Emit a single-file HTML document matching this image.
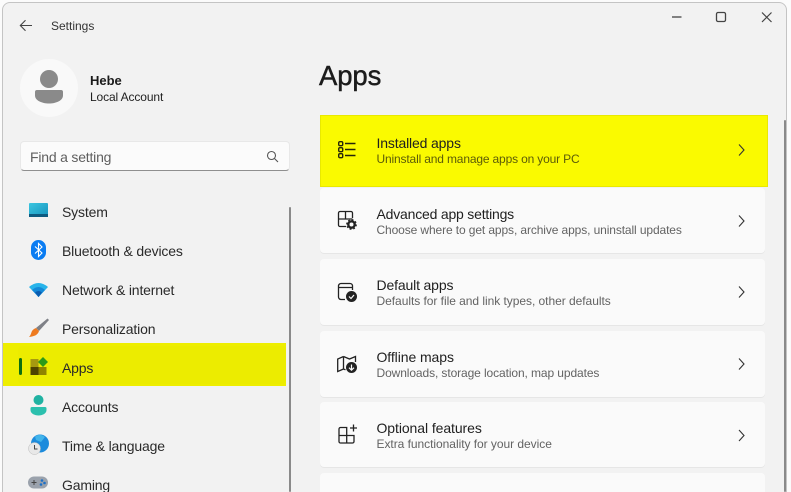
<!DOCTYPE html>
<html><head><meta charset="utf-8">
<style>
html,body{margin:0;padding:0;width:791px;height:492px;overflow:hidden}
#root{position:relative;width:791px;height:492px;overflow:hidden;background:#fbfbfb;font-family:"Liberation Sans",sans-serif;color:#1b1b1b}
.a{position:absolute}
.t{position:absolute;white-space:nowrap;line-height:18px}
#win{left:2px;top:2px;width:785px;height:500px;background:#f2f2f2;border:1px solid #c4c4c4;border-radius:8px 8px 0 0;box-sizing:border-box}
.nav{font-size:14px;color:#2a2a2a;left:62px;letter-spacing:-.16px}
.card{position:absolute;left:320px;width:445px;background:#fafafa;border-radius:4px;box-shadow:0 1px 0 #e6e6e6}
.h{position:absolute;left:376.5px;font-size:14px;color:#1f1f1f;white-space:nowrap;line-height:18px;letter-spacing:-.15px}
.s{position:absolute;left:376.5px;font-size:12px;color:#636363;white-space:nowrap;line-height:16px;letter-spacing:-.1px}
svg{position:absolute;overflow:visible}
</style></head><body><div id="root">
<div id="win" class="a"></div>

<svg style="left:19px;top:18px" width="15" height="15" viewBox="0 0 15 15" fill="none" stroke="#444" stroke-width="1.100"><path d="M1.500 7.500H13M6.500 2.200L1.300 7.500l5.200 5.300"/></svg>
<div class="t" style="left:51px;top:17px;font-size:12px;color:#333;letter-spacing:0">Settings</div>

<svg style="left:654px;top:0" width="137" height="34" fill="none" stroke="#444"><path d="M18 17h9.500" stroke-width="1.300"/><rect x="62.500" y="12.500" width="9" height="9" rx="1.500" stroke-width="1.300"/><path d="M108 12.500l9.500 9.500M117.500 12.500l-9.500 9.500" stroke-width="1.200"/></svg>

<div class="a" style="left:20px;top:59px;width:58px;height:58px;border-radius:50%;background:#f9f9f9"></div>
<svg style="left:34px;top:69px" width="30" height="36"><circle cx="15" cy="10" r="9" fill="#8a8a8a"/><path d="M3 21h24a2 2 0 0 1 2 2v3.500c0 5-7 8-14 8s-14-3-14-8V23a2 2 0 0 1 2-2z" fill="#8a8a8a"/></svg>
<div class="t" style="left:90px;top:72px;font-size:13px;font-weight:bold;color:#1a1a1a">Hebe</div>
<div class="t" style="left:90px;top:88px;font-size:12px;color:#222;letter-spacing:-.12px">Local Account</div>

<div class="a" style="left:20px;top:141px;width:270px;height:30px;background:#fbfbfb;border-radius:4px;border:1px solid #e8e8e8;border-bottom:1.500px solid #8f8f8f;box-sizing:border-box"></div>
<div class="t" style="left:30px;top:148px;font-size:14px;color:#5f5f5f;letter-spacing:-.2px">Find a setting</div>
<svg style="left:266px;top:150px" width="13" height="13" fill="none" stroke="#555" stroke-width="1.100"><circle cx="5.500" cy="5.500" r="4"/><path d="M8.500 8.500l3.500 3.500"/></svg>

<div class="a" style="left:3px;top:343px;width:283px;height:43px;background:#eeee00"></div>
<div class="a" style="left:18px;top:346px;width:268px;height:38px;border-radius:4px;background:#ecec00"></div>
<div class="a" style="left:19px;top:358px;width:3px;height:17px;border-radius:2px;background:#0c6f10"></div>

<svg style="left:29px;top:203px" width="19" height="16"><defs><linearGradient id="g1" x1="0" y1="0" x2="1" y2="1"><stop offset="0" stop-color="#3cc6e0"/><stop offset="1" stop-color="#1492bd"/></linearGradient></defs><rect width="19" height="14" rx="1" fill="url(#g1)"/><rect y="11" width="19" height="3" fill="#0d5a80"/></svg>
<div class="t nav" style="top:203px">System</div>

<svg style="left:31px;top:240px" width="15" height="20"><rect width="15" height="20" rx="7.500" fill="#0a7cf2"/><path d="M4 6.500l7 6.500-3.500 3.500V3.500L11 7l-7 6.500" fill="none" stroke="#fff" stroke-width="1.100"/></svg>
<div class="t nav" style="top:242px">Bluetooth &amp; devices</div>

<svg style="left:29px;top:282px" width="19" height="15"><path d="M0 5Q9.500-3 19 5L9.500 15z" fill="#28b4ea"/><path d="M3 8Q9.500 2 16 8L9.500 15z" fill="#1489d8"/><path d="M6 10.500Q9.500 7.500 13 10.500L9.500 15z" fill="#0b5cb0"/></svg>
<div class="t nav" style="top:281px">Network &amp; internet</div>

<svg style="left:29px;top:318px" width="20" height="20"><path d="M18.500 0.500L20 2 10 13 7 10z" fill="#7f8187"/><path d="M7 10l3 3c-1 4-5 5.500-10 6 2-2 2-4 3-6 1-1.500 2.500-2.500 4-3z" fill="#ee7a1f"/></svg>
<div class="t nav" style="top:320px">Personalization</div>

<svg style="left:30px;top:357px" width="18" height="18"><rect x="0.500" y="2" width="8" height="8" fill="#a69a10"/><rect x="0.500" y="10" width="8" height="8" fill="#4e4400"/><rect x="8.500" y="10" width="8" height="8" fill="#8f8400"/><path d="M13 0l5 5-5 5-5-5z" fill="#2c9a18"/></svg>
<div class="t nav" style="top:359px">Apps</div>

<svg style="left:30px;top:395px" width="17" height="21"><circle cx="8.500" cy="5" r="5" fill="#20b2a2"/><path d="M2 12h13a1.500 1.500 0 0 1 1.500 1.500V15c0 3.500-4 5.500-8 5.500s-8-2-8-5.500v-1.500A1.500 1.500 0 0 1 2 12z" fill="#2cc0ae"/></svg>
<div class="t nav" style="top:398px">Accounts</div>

<svg style="left:28px;top:434px" width="21" height="21"><circle cx="12" cy="9.500" r="9" fill="#1c8bdc"/><path d="M7 2.500Q12-1 17 3L13 8 8 6z" fill="#42b4ea"/><circle cx="6.500" cy="14.500" r="6" fill="#e8e8e8" stroke="#bbb" stroke-width=".5"/><path d="M6.500 11v4h3" fill="none" stroke="#444" stroke-width="1"/></svg>
<div class="t nav" style="top:437px">Time &amp; language</div>

<svg style="left:28px;top:476px" width="21" height="16"><rect y="0.500" width="20" height="12" rx="6" fill="#9ba2ac"/><path d="M3.500 6.500h5M6 4v5" stroke="#444" stroke-width="1"/><circle cx="14" cy="4.500" r="1.300" fill="#1c70c8"/><circle cx="16.500" cy="7" r="1.300" fill="#1c70c8"/><circle cx="13" cy="8.500" r="1.300" fill="#1c70c8"/></svg>
<div class="t nav" style="top:476px">Gaming</div>

<div class="a" style="left:289px;top:207px;width:2px;height:285px;background:#8a8a8a;border-radius:1px"></div>
<div class="a" style="left:783.500px;top:120px;width:2px;height:372px;background:#8a8a8a;border-radius:1px"></div>

<div class="t" style="left:319px;top:60px;font-size:27.500px;line-height:32px;color:#1c1c1c;letter-spacing:-.1px;-webkit-text-stroke:.45px #1c1c1c">Apps</div>

<div class="a" style="left:320px;top:115px;width:448px;height:72px;background:#fafa00;box-sizing:border-box;border:1.500px solid #e9e900"></div>
<svg style="left:338px;top:141px" width="19" height="17" fill="none" stroke="#26260a" stroke-width="1.400"><rect x="0.700" y="0.700" width="4" height="4" rx="1.200"/><rect x="0.700" y="6.700" width="4" height="4" rx="1.200"/><rect x="0.700" y="12.700" width="4" height="4" rx="1.200"/><path d="M7 2.500h10.500M7 8.500h10.500M7 14.500h10.500"/></svg>
<div class="h" style="top:134px">Installed apps</div>
<div class="s" style="top:151px;color:#5c5c08;letter-spacing:-.16px">Uninstall and manage apps on your PC</div>

<div class="card" style="top:188px;height:65px"></div>
<svg style="left:338px;top:211px" width="20" height="20" fill="none" stroke="#222" stroke-width="1.300"><path d="M8 15.500H2a1.500 1.500 0 0 1-1.500-1.500V2A1.500 1.500 0 0 1 2 .5h11A1.500 1.500 0 0 1 14.500 2v5M.5 8h14M7.500.5V8"/><circle cx="13.500" cy="13.500" r="3.200" stroke-width="2.400"/><circle cx="13.500" cy="13.500" r="4.700" stroke-dasharray="1.800 1.900" stroke-width="1.400"/></svg>
<div class="h" style="top:205px;letter-spacing:-.2px">Advanced app settings</div>
<div class="s" style="top:222px;letter-spacing:-.11px">Choose where to get apps, archive apps, uninstall updates</div>

<div class="card" style="top:259px;height:65.500px"></div>
<svg style="left:338px;top:283px" width="20" height="20" fill="none" stroke="#222" stroke-width="1.300"><path d="M7 16.500H3A2.500 2.500 0 0 1 .5 14V3A2.500 2.500 0 0 1 3 .5h9A2.500 2.500 0 0 1 14.500 3v4M.5 4.500h14"/><circle cx="13.500" cy="13.500" r="5.500" fill="#222" stroke="none"/><path d="M11 13.500l2 2 3-3.500" stroke="#fbfbfb" stroke-width="1.200"/></svg>
<div class="h" style="top:276px">Default apps</div>
<div class="s" style="top:293px;letter-spacing:-.04px">Defaults for file and link types, other defaults</div>

<div class="card" style="top:331px;height:66px"></div>
<svg style="left:337px;top:354px" width="21" height="20" fill="none" stroke="#222" stroke-width="1.300"><path d="M6.500 2.500L.7 5v12.500l5.800-2.500M6.500 2.500V15M6.500 2.500l6 2.500 6-2.500V8M6.500 15l2 .8"/><circle cx="14.500" cy="13.500" r="5.500" fill="#222" stroke="none"/><path d="M14.500 10.500v5.500M12 13.700l2.500 2.500 2.500-2.500" stroke="#fbfbfb" stroke-width="1.200"/></svg>
<div class="h" style="top:348px;letter-spacing:-.08px">Offline maps</div>
<div class="s" style="top:365px">Downloads, storage location, map updates</div>

<div class="card" style="top:402px;height:65px"></div>
<svg style="left:338px;top:426px" width="20" height="18" fill="none" stroke="#222" stroke-width="1.300"><path d="M2.500 1.500h6.200v15.500H2.500A1.500 1.500 0 0 1 1 15.500V3A1.500 1.500 0 0 1 2.500 1.500zM1 9.500h15M8.700 9.500H16v6a1.500 1.500 0 0 1-1.500 1.500H8.700M15.500-1.500v7M12 2h7"/></svg>
<div class="h" style="top:419px;letter-spacing:-.08px">Optional features</div>
<div class="s" style="top:436px;letter-spacing:-.04px">Extra functionality for your device</div>

<div class="card" style="top:473px;height:30px"></div>

<svg style="left:737px;top:0" width="10" height="470" fill="none" stroke="#333" stroke-width="1.100"><path d="M2 144.500l5 5.500-5 5.500M2 215.500l5 5.500-5 5.500M2 286.500l5 5.500-5 5.500M2 358.500l5 5.500-5 5.500M2 430l5 5.500-5 5.500"/></svg>
</div></body></html>
